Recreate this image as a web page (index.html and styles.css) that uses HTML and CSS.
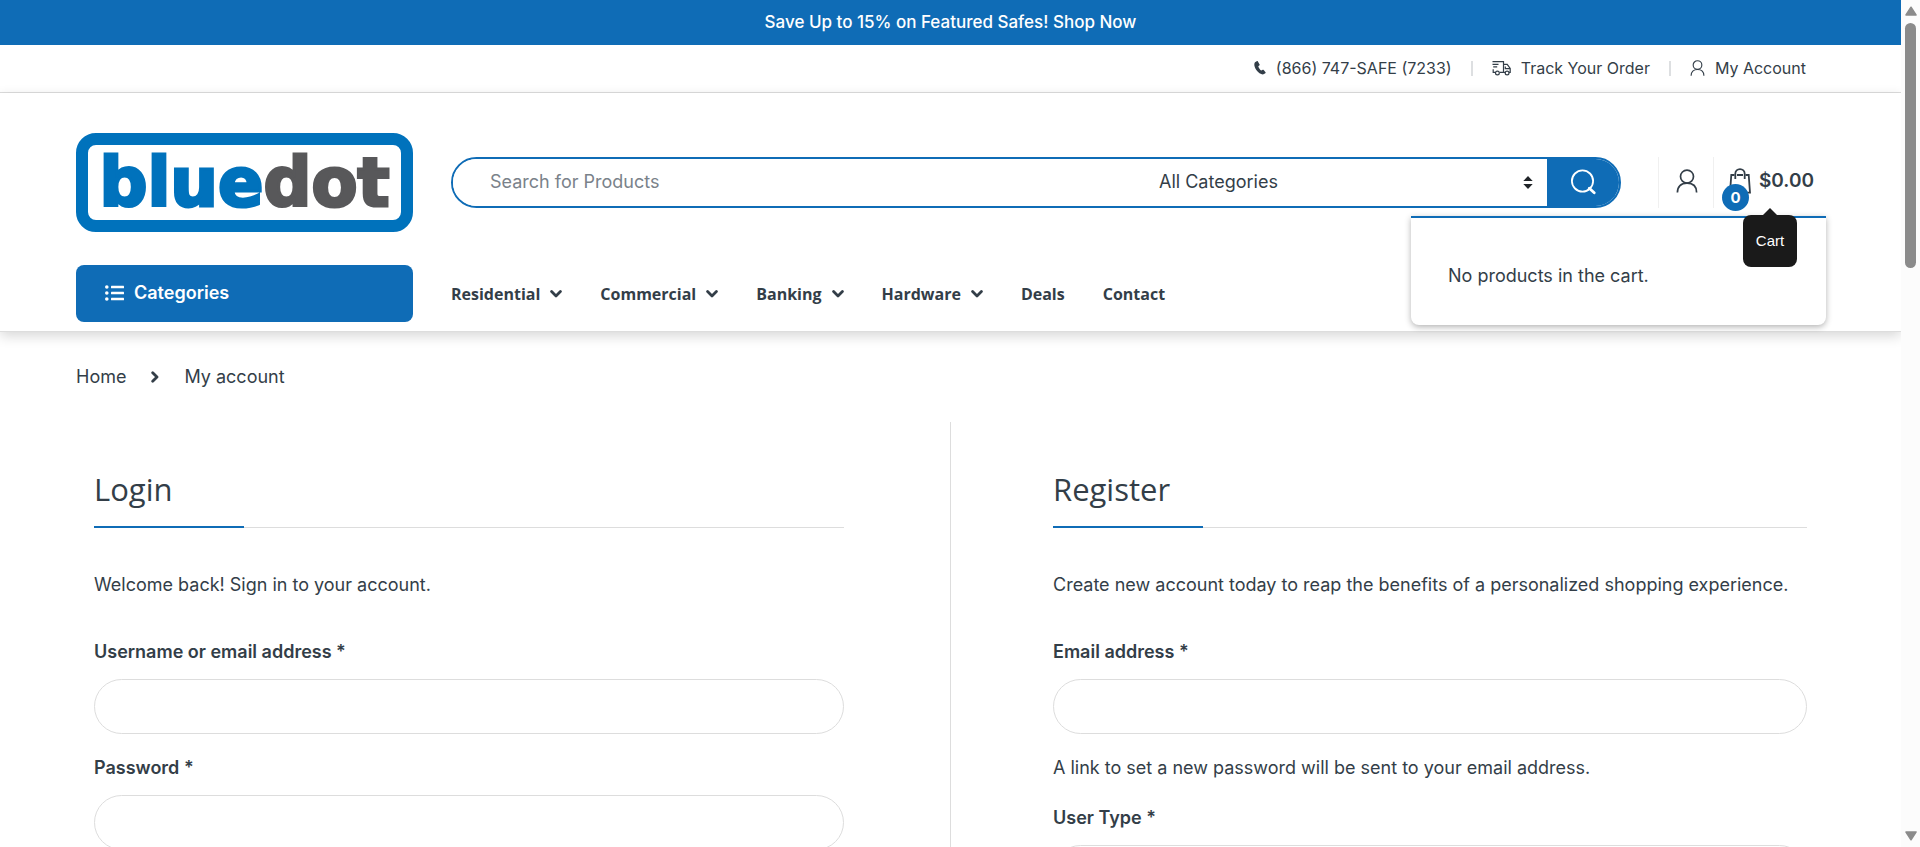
FILE: index.html
```html
<!DOCTYPE html>
<html lang="en">
<head>
<meta charset="utf-8">
<meta name="viewport" content="width=device-width, initial-scale=1">
<title>My account - bluedot</title>
<link rel="stylesheet" href="styles.css">
</head>
<body>
<svg class="sprite" aria-hidden="true">
  <symbol id="i-user" viewBox="0 0 22 24"><g fill="none" stroke="currentColor" stroke-width="1.7"><circle cx="11" cy="7.6" r="6.5"/><path d="M1.4 23.6C1.4 17.6 5 14.2 11 14.2S20.600 17.600 20.600 23.600"/></g></symbol>
  <symbol id="i-chev" viewBox="0 0 12 8"><path d="M1.600 1.600 6 5.900 10.400 1.600" fill="none" stroke="currentColor" stroke-width="2.800" stroke-linecap="round" stroke-linejoin="round"/></symbol>
</svg>
<div class="window">
<div class="page">
  <a class="promo" href="#">Save Up to 15% on Featured Safes! Shop Now</a>

  <div class="topbar">
    <ul class="topbar-list">
      <li><a href="#"><svg class="ic-phone" viewBox="0 0 12 14" aria-hidden="true"><path d="M2.700.2 1 1.300C-.2 2.700.1 5.900 2.300 9s5.200 4.900 7.300 4.300l1.700-1c.4-.3.5-.6.2-1L9.700 9c-.3-.3-.6-.4-1-.2l-1.400.8C6.300 9.200 4.500 6.700 4.300 5.300l1.200-1c.3-.3.3-.5.1-.9L3.900.5C3.600.1 3.200-.1 2.700.2z" fill="currentColor"/></svg>(866) 747-SAFE (7233)</a></li>
      <li><a href="#"><svg class="ic-truck" viewBox="0 0 19 16" aria-hidden="true"><g fill="none" stroke="currentColor" stroke-width="1.200"><path d="M.5 1.600h11v10.800H7.800M.5 4.300h6M1.200 6.900h4M1.200 9.300v3.100h1.900M11.500 4.300h3.700l3 4.200v3.900h-1.300M13.300 12.400h-1.800M13.300 6.500v2.200h4.500"/><circle cx="5.400" cy="13" r="1.900"/><circle cx="15.100" cy="13" r="1.900"/></g></svg>Track Your Order</a></li>
      <li><a href="#"><svg class="ic-user-sm" aria-hidden="true"><use href="#i-user"/></svg>My Account</a></li>
    </ul>
  </div>

  <header class="header">
    <div class="masthead">
      <a class="logo" href="#" aria-label="bluedot"><span>blue<span class="logo-dot">dot</span></span></a>
      <form class="search" role="search">
        <input class="search-field" type="text" aria-label="Search for Products" placeholder="Search for Products">
        <div class="search-cat">
          <select aria-label="Category"><option>All Categories</option></select>
          <svg viewBox="0 0 10 13" aria-hidden="true"><path d="M5 0 9.700 5H.3zM5 13 .3 8h9.400z" fill="#212529"/></svg>
        </div>
        <button class="search-btn" type="button" aria-label="Search"><svg viewBox="0 0 25 26" aria-hidden="true"><g fill="none" stroke="#fff"><circle cx="11.500" cy="12" r="10.600" stroke-width="1.800"/><path d="m18.300 19.300 4.900 4.500" stroke-width="2.800" stroke-linecap="round"/></g></svg></button>
      </form>
      <div class="tools">
        <a class="tool tool-user" href="#" aria-label="My Account"><svg aria-hidden="true"><use href="#i-user"/></svg></a>
        <div class="tool tool-cart">
          <a class="cart-link" href="#">
            <svg viewBox="0 0 22 26" aria-hidden="true"><g fill="none" stroke="currentColor" stroke-width="1.800"><path d="M5.500 7H2.300L1 24.600h20L19.700 7h-3.200M8 7h6"/><path d="M6.300 11V5.800a4.700 4.700 0 0 1 9.400 0V11"/></g></svg>
            <span class="cart-count">0</span>
            <span class="cart-total">$0.00</span>
          </a>
          <span class="tip" role="tooltip">Cart</span>
        </div>
        <div class="minicart"><p>No products in the cart.</p></div>
      </div>
    </div>
    <div class="navrow">
      <button class="cats" type="button"><svg viewBox="0 0 19 16" aria-hidden="true"><g fill="#fff"><circle cx="1.800" cy="2" r="1.800"/><circle cx="1.800" cy="8" r="1.800"/><circle cx="1.800" cy="14" r="1.800"/><rect x="6" y=".7" width="13" height="2.600" rx=".5"/><rect x="6" y="6.700" width="13" height="2.600" rx=".5"/><rect x="6" y="12.700" width="13" height="2.600" rx=".5"/></g></svg>Categories</button>
      <nav class="nav">
        <a href="#">Residential<svg aria-hidden="true"><use href="#i-chev"/></svg></a>
        <a href="#">Commercial<svg aria-hidden="true"><use href="#i-chev"/></svg></a>
        <a href="#">Banking<svg aria-hidden="true"><use href="#i-chev"/></svg></a>
        <a href="#">Hardware<svg aria-hidden="true"><use href="#i-chev"/></svg></a>
        <a href="#">Deals</a>
        <a href="#">Contact</a>
      </nav>
    </div>
  </header>

  <main class="content">
    <nav class="crumbs" aria-label="Breadcrumb">
      <a href="#">Home</a>
      <svg viewBox="0 0 8 12" aria-hidden="true"><path d="M1.700 1.700 6 6l-4.300 4.300" fill="none" stroke="currentColor" stroke-width="2.800" stroke-linecap="round" stroke-linejoin="round"/></svg>
      <span>My account</span>
    </nav>
    <div class="account">
      <section class="col col-login">
        <h2>Login</h2>
        <p class="intro">Welcome back! Sign in to your account.</p>
        <form>
          <label for="user">Username or email address *</label>
          <input class="field" id="user" type="text">
          <label for="pass">Password *</label>
          <input class="field" id="pass" type="password">
        </form>
      </section>
      <section class="col col-register">
        <h2>Register</h2>
        <p class="intro">Create new account today to reap the benefits of a personalized shopping experience.</p>
        <form>
          <label for="email">Email address *</label>
          <input class="field" id="email" type="email">
          <p class="hint">A link to set a new password will be sent to your email address.</p>
          <label for="type">User Type *</label>
          <select class="field" id="type"><option></option></select>
        </form>
      </section>
    </div>
  </main>
</div>
<div class="scrollbar" aria-hidden="true">
  <svg viewBox="0 0 12 10"><path d="M6 1.200 11 9H1z" fill="#8b8b8b" stroke="#8b8b8b" stroke-width="1.500" stroke-linejoin="round"/></svg>
  <div class="track"><div class="thumb"></div></div>
  <svg viewBox="0 0 12 10"><path d="M6 8.800 11 1H1z" fill="#8b8b8b" stroke="#8b8b8b" stroke-width="1.500" stroke-linejoin="round"/></svg>
</div>
</div>
</body>
</html>
```
FILE: styles.css
```css
* { box-sizing: border-box; }
body {
  margin: 0;
  background: #fff;
  color: #333e48;
  font: 18px/24px Inter, "Open Sans", sans-serif;
}
a { color: inherit; text-decoration: none; }
p, h2, ul { margin: 0; padding: 0; }
svg { display: block; flex: none; }
button, input, select { font: inherit; color: inherit; }
.sprite { position: absolute; width: 0; height: 0; }

.window { display: grid; grid-template-columns: minmax(0, 1fr) 19px; height: 100vh; }
.page { overflow-y: auto; scrollbar-width: none; }

.promo {
  display: block;
  padding: 10px 0 11px;
  background: #0f6cb6;
  color: #fff;
  text-align: center;
  font-size: 17px;
  font-weight: 500;
}

.topbar { padding: 0 95px 0 76px; border-bottom: 1px solid #ddd; }
.topbar-list {
  display: flex;
  justify-content: flex-end;
  list-style: none;
  font-size: 16px;
  padding: 11px 0 12px;
}
.topbar-list li { display: flex; align-items: center; }
.topbar-list li + li::before {
  content: "";
  width: 2px;
  height: 15px;
  margin: 0 19px;
  background: #dddfe1;
}
.topbar-list a { display: flex; align-items: center; gap: 10px; }
.ic-phone { width: 12px; height: 14px; }
.ic-truck { width: 19px; height: 16px; }
.ic-user-sm { width: 15px; height: 16px; }

.header {
  position: relative;
  padding: 40px 75px 9px 76px;
  border-bottom: 1px solid #ddd;
  box-shadow: 0 4px 12px rgba(0, 0, 0, .16);
}
.masthead { display: flex; align-items: center; }
.logo {
  display: flex;
  flex: none;
  align-items: center;
  justify-content: center;
  width: 337px;
  height: 99px;
  border: 12px solid #0072bc;
  border-radius: 20px;
  color: #0072bc;
  font-family: "DejaVu Sans", Inter, sans-serif;
  font-weight: 700;
  font-size: 67px;
  line-height: 70px;
  -webkit-text-stroke: 3px currentColor;
}
.logo-dot { color: #58585a; }

.search {
  display: flex;
  flex: 1;
  height: 51px;
  margin-left: 38px;
  border: 2px solid #0f6cb6;
  border-radius: 26px;
  overflow: hidden;
}
.search-field { flex: 1; min-width: 0; border: 0; padding: 0 37px 2px; outline: 0; }
.search-field::placeholder { color: #7a828a; opacity: 1; }
.search-cat { display: flex; align-items: center; position: relative; width: 412px; }
.search-cat select {
  width: 100%;
  height: 47px;
  padding: 0 24px 2px;
  border: 0;
  background: transparent;
  appearance: none;
}
.search-cat svg { position: absolute; right: 14px; width: 10px; height: 13px; pointer-events: none; }
.search-btn {
  display: flex;
  align-items: center;
  justify-content: center;
  width: 72px;
  padding: 0 0 2px;
  border: 0;
  background: #0f6cb6;
}
.search-btn svg { width: 25px; height: 26px; }

.tools { display: flex; position: relative; margin-left: 37px; }
.tool { display: flex; align-items: center; height: 51px; padding-bottom: 3px; border-left: 1px solid #f0f0f0; }
.tool-user { width: 55px; padding-left: 17px; }
.tool-user svg { width: 22px; height: 24px; }
.tool-cart { width: 113px; padding-left: 15px; position: relative; }
.cart-link { display: flex; align-items: center; gap: 8px; position: relative; }
.cart-link svg { width: 22px; height: 26px; }
.cart-count {
  position: absolute;
  left: -7px;
  top: 16px;
  width: 27px;
  height: 27px;
  border-radius: 50%;
  background: #0f6cb6;
  color: #fff;
  font-size: 15px;
  font-weight: 700;
  line-height: 27px;
  text-align: center;
}
.cart-total { font-size: 19px; font-weight: 600; }
.tip {
  position: absolute;
  z-index: 3;
  top: 58px;
  left: 29px;
  width: 54px;
  border-radius: 8px;
  background: #1a1a1a;
  color: #fff;
  font: 15px/52px "Liberation Sans", Arial, sans-serif;
  text-align: center;
}
.tip::before {
  content: "";
  position: absolute;
  left: 19px;
  top: -7px;
  border: 8px solid transparent;
  border-top: 0;
  border-bottom-color: #1a1a1a;
}
.minicart {
  position: absolute;
  z-index: 2;
  right: 0;
  top: 59px;
  width: 415px;
  padding: 46px 37px 37px;
  border-top: 2px solid #0f6cb6;
  border-radius: 0 0 8px 8px;
  background: #fff;
  box-shadow: 0 2px 6px rgba(0, 0, 0, .3);
}

.navrow { display: flex; align-items: center; margin-top: 33px; }
.cats {
  display: flex;
  align-items: center;
  gap: 10px;
  width: 337px;
  height: 57px;
  padding: 0 29px 2px;
  border: 0;
  border-radius: 8px;
  background: #0f6cb6;
  color: #fff;
  font-weight: 600;
}
.cats svg { width: 19px; height: 16px; }
.nav {
  display: flex;
  gap: 38px;
  margin-left: 38px;
  font-family: "Open Sans", sans-serif;
  font-size: 16px;
  font-weight: 700;
}
.nav a { display: flex; align-items: center; gap: 10px; }
.nav svg { width: 12px; height: 8px; }

.content { padding: 33px 75px 40px 76px; }
.crumbs { display: flex; align-items: center; gap: 25px; }
.crumbs svg { width: 8px; height: 12px; }
.account { display: grid; grid-template-columns: 1fr 1fr; margin-top: 33px; }
.col { padding: 46px 19px 60px 102px; }
.col-login { padding: 46px 106px 60px 18px; border-right: 1px solid #ddd; }
.col h2 {
  position: relative;
  padding-bottom: 16px;
  border-bottom: 1px solid #ddd;
  font: 400 31px/43px "Open Sans", sans-serif;
}
.col h2::after {
  content: "";
  position: absolute;
  left: 0;
  bottom: -1px;
  width: 150px;
  height: 2px;
  background: #0f6cb6;
}
.intro { margin: 45px 0 43px; }
.col label { display: block; margin-bottom: 15px; font-weight: 600; }
.field {
  display: block;
  width: 100%;
  height: 55px;
  margin-bottom: 22px;
  padding: 0 28px;
  border: 1px solid #ddd;
  border-radius: 28px;
  background: #fff;
  appearance: none;
}
.hint { margin-bottom: 26px; }

.scrollbar {
  display: flex;
  flex-direction: column;
  align-items: center;
  gap: 7px;
  padding: 6px 0;
  background: #fcfcfc;
}
.scrollbar svg { width: 12px; height: 10px; }
.track { flex: 1; }
.thumb { width: 11px; height: 245px; border-radius: 6px; background: #8b8b8b; }
```
